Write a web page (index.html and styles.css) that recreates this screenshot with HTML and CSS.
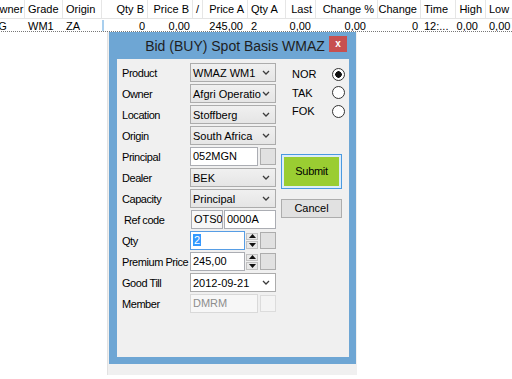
FILE: index.html
```html
<!DOCTYPE html>
<html lang="en">
<head>
    <meta charset="UTF-8">
    <title>Bid (BUY) Spot Basis WMAZ</title>
    <link rel="stylesheet" href="styles.css">
</head>
<body>
    <div class="grid">
        <div class="grid-row grid-head">
            <div class="cell c-owner left">Owner</div>
            <div class="cell c-grade left">Grade</div>
            <div class="cell c-origin left">Origin</div>
            <div class="cell c-qtyb">Qty B</div>
            <div class="cell c-priceb">Price B</div>
            <div class="cell c-slash left">/</div>
            <div class="cell c-pricea">Price A</div>
            <div class="cell c-qtya left">Qty A</div>
            <div class="cell c-last">Last</div>
            <div class="cell c-chgp">Change %</div>
            <div class="cell c-chg">Change</div>
            <div class="cell c-time left">Time</div>
            <div class="cell c-high">High</div>
            <div class="cell c-low left">Low</div>
        </div>
        <div class="grid-row grid-data">
            <div class="cell c-owner left">AG</div>
            <div class="cell c-grade left">WM1</div>
            <div class="cell c-origin left">ZA</div>
            <div class="cell c-qtyb marker">0</div>
            <div class="cell c-priceb">0,00</div>
            <div class="cell c-slash"></div>
            <div class="cell c-pricea pad5">245,00</div>
            <div class="cell c-qtya left">2</div>
            <div class="cell c-last pad5">0,00</div>
            <div class="cell c-chgp pad12">0,00</div>
            <div class="cell c-chg">0</div>
            <div class="cell c-time left">12:...</div>
            <div class="cell c-high pad8">0,00</div>
            <div class="cell c-low left">0,00</div>
        </div>
    </div>

    <!-- panel that sits behind the dialog -->
    <div class="backdrop"></div>

    <div class="dialog">
        <div class="titlebar">
            <span class="title">Bid (BUY) Spot Basis WMAZ</span>
            <button class="close">x</button>
        </div>
        <div class="dialog-body">
            <div class="fields">
                <label>Product</label>
                <div class="combo"><span>WMAZ WM1</span><svg width="8" height="5"><path d="M1 1 L4 4 L7 1" /></svg></div>

                <label>Owner</label>
                <div class="combo"><span>Afgri Operatio</span><svg width="8" height="5"><path d="M1 1 L4 4 L7 1" /></svg></div>

                <label>Location</label>
                <div class="combo"><span>Stoffberg</span><svg width="8" height="5"><path d="M1 1 L4 4 L7 1" /></svg></div>

                <label>Origin</label>
                <div class="combo"><span>South Africa</span><svg width="8" height="5"><path d="M1 1 L4 4 L7 1" /></svg></div>

                <label>Principal</label>
                <div class="with-btn">
                    <div class="text">052MGN</div>
                    <div class="sq"></div>
                </div>

                <label>Dealer</label>
                <div class="combo"><span>BEK</span><svg width="8" height="5"><path d="M1 1 L4 4 L7 1" /></svg></div>

                <label>Capacity</label>
                <div class="combo"><span>Principal</span><svg width="8" height="5"><path d="M1 1 L4 4 L7 1" /></svg></div>

                <label class="indent">Ref code</label>
                <div class="ref">
                    <div class="text ro">OTS0</div>
                    <div class="text">0000A</div>
                </div>

                <label>Qty</label>
                <div class="with-btn">
                    <div class="text focus"><span class="sel">2</span></div>
                    <div class="spin">
                        <div class="spin-btn"><svg width="7" height="4"><path d="M0 4 L3.5 0 L7 4 Z" /></svg></div>
                        <div class="spin-btn"><svg width="7" height="4"><path d="M0 0 L3.5 4 L7 0 Z" /></svg></div>
                    </div>
                    <div class="sq"></div>
                </div>

                <label>Premium Price</label>
                <div class="with-btn">
                    <div class="text">245,00</div>
                    <div class="spin">
                        <div class="spin-btn"><svg width="7" height="4"><path d="M0 4 L3.5 0 L7 4 Z" /></svg></div>
                        <div class="spin-btn"><svg width="7" height="4"><path d="M0 0 L3.5 4 L7 0 Z" /></svg></div>
                    </div>
                    <div class="sq"></div>
                </div>

                <label>Good Till</label>
                <div class="combo date"><span>2012-09-21</span><svg width="8" height="5"><path d="M1 1 L4 4 L7 1" /></svg></div>

                <label>Member</label>
                <div class="with-btn">
                    <div class="text disabled">DMRM</div>
                    <div class="sq disabled"></div>
                </div>
            </div>

            <div class="side">
                <div class="radios">
                    <div class="radio-row"><span>NOR</span><span class="radio checked"></span></div>
                    <div class="radio-row"><span>TAK</span><span class="radio"></span></div>
                    <div class="radio-row"><span>FOK</span><span class="radio"></span></div>
                </div>
                <button class="btn submit">Submit</button>
                <button class="btn cancel">Cancel</button>
            </div>
        </div>
    </div>
</body>
</html>
```

FILE: styles.css
```css
* {
    box-sizing: border-box;
}
body {
    margin: 0;
    width: 512px;
    height: 379px;
    overflow: hidden;
    position: relative;
    background-color: #fff;
    font-family: "Liberation Sans", Arial, sans-serif;
    font-size: 11px;
    color: #000;
}

/* grid in the background, scrolled a little to the right */
.grid {
    width: 531px;
    margin-left: -11px;
}
.grid-row {
    display: flex;
    white-space: nowrap;
}
.grid-head {
    height: 19px;
    border-bottom: 1px solid #e4e4e4;
}
.grid-head .cell {
    line-height: 18px;
    border-right: 1px solid #e6e6e6;
}
.grid-data {
    height: 13px;
    border-bottom: 1px dotted #777;
    line-height: 12px;
    padding-top: 1px;
}
.cell {
    overflow: hidden;
    text-align: right;
    padding-right: 3px;
}
.cell.left {
    text-align: left;
    padding-left: 3px;
    padding-right: 0;
}
.cell.pad5 { padding-right: 5px; }
.cell.pad8 { padding-right: 8px; }
.cell.pad12 { padding-right: 12px; }
.cell.marker {
    border-left: 2px solid #a9cfee;
}
.c-owner { width: 36px; }
.c-owner.left { padding-left: 2px; }
.c-grade { width: 38px; }
.c-origin { width: 39px; }
.c-qtyb { width: 46px; }
.c-priceb { width: 45px; }
.c-slash { width: 10px; }
.c-pricea { width: 45px; }
.c-qtya { width: 38px; }
.c-last { width: 30px; }
.c-chgp { width: 62px; }
.c-chg { width: 43px; }
.c-time { width: 35px; }
.c-high { width: 30px; }
.c-low { width: 34px; }

.backdrop {
    position: absolute;
    left: 107px;
    top: 32px;
    width: 250px;
    height: 343px;
    background-color: #f0f0f0;
    border-left: 1px solid #e2e2e2;
}

/* dialog window */
.dialog {
    position: absolute;
    left: 109px;
    top: 32px;
    width: 247px;
    height: 332px;
    background-color: #6ea6d4;
    padding: 0 7px 7px 8px;
    display: flex;
    flex-direction: column;
}
.titlebar {
    height: 27px;
    display: flex;
    align-items: center;
    justify-content: center;
    position: relative;
    padding-left: 4px;
}
.title {
    font-size: 14px;
    color: #1e1e1e;
}
.close {
    position: absolute;
    right: 2px;
    top: 4px;
    width: 18px;
    height: 16px;
    border: none;
    padding: 0;
    background-color: #c75050;
    color: #fff;
    font-family: "Liberation Sans", Arial, sans-serif;
    font-weight: bold;
    font-size: 10px;
    line-height: 14px;
}
.dialog-body {
    flex: 1;
    background-color: #f0f0f0;
    display: flex;
    padding: 4px 0 0 5px;
}

.fields {
    display: grid;
    grid-template-columns: 68px 86px;
    grid-auto-rows: 19px;
    row-gap: 2px;
}
.fields label {
    align-self: center;
    white-space: nowrap;
    letter-spacing: -0.45px;
}
.fields label.indent {
    padding-left: 2px;
}
.combo {
    display: flex;
    align-items: center;
    justify-content: space-between;
    border: 1px solid #acacac;
    background: linear-gradient(#f0f0f0, #e5e5e5);
    padding: 0 5px 0 2px;
    white-space: nowrap;
    overflow: hidden;
}
.combo.date {
    background: #fff;
}
.combo svg path {
    fill: none;
    stroke: #3c3c3c;
    stroke-width: 1.3;
}
.text {
    border: 1px solid #abadb3;
    background-color: #fff;
    padding: 0 2px;
    line-height: 17px;
    white-space: nowrap;
    overflow: hidden;
}
.text.ro {
    background-color: #f7f7f7;
}
.text.focus {
    border-color: #569de5;
}
.text.disabled {
    border-color: #d9d9d9;
    background-color: #f7f7f7;
    color: #8d8d8d;
}
.sel {
    background-color: #3399ff;
    color: #fff;
    padding: 0 1px;
}
.with-btn {
    display: flex;
    align-items: center;
}
.with-btn .text {
    flex: 1;
    height: 19px;
}
.sq {
    width: 16px;
    height: 17px;
    margin-left: 2px;
    background-color: #e1e1e1;
    border: 1px solid #adadad;
}
.sq.disabled {
    background-color: #f4f4f4;
    border-color: #dcdcdc;
}
.spin {
    width: 12px;
    height: 16px;
    margin-left: 1px;
    display: flex;
    flex-direction: column;
    gap: 1px;
}
.spin-btn {
    flex: 1;
    display: flex;
    align-items: center;
    justify-content: center;
    background-color: #e8e8e8;
    border: 1px solid #c2c2c2;
}
.spin-btn svg path {
    fill: #111;
}
.ref {
    display: flex;
    gap: 1px;
    padding-left: 1px;
}
.ref .text:first-child {
    width: 32px;
}
.ref .text:last-child {
    flex: 1;
}

/* right hand column */
.side {
    margin-left: 5px;
    width: 64px;
    display: flex;
    flex-direction: column;
    align-items: flex-start;
}
.radios {
    width: 64px;
    margin-top: 2px;
}
.radio-row {
    display: flex;
    align-items: center;
    justify-content: space-between;
    height: 18.5px;
    padding-left: 11px;
}
.radio {
    width: 13px;
    height: 13px;
    border: 1px solid #333;
    border-radius: 50%;
    background-color: #fff;
}
.radio.checked {
    background: radial-gradient(circle, #111 0, #111 3px, #fff 3.5px);
}
.btn {
    width: 61px;
    font-family: "Liberation Sans", Arial, sans-serif;
    font-size: 11px;
    color: #000;
    padding: 0;
}
.submit {
    margin-top: 33px;
    height: 35px;
    background-color: #9acd32;
    border: 1px solid #4a9ae0;
    box-shadow: inset 0 0 0 2px #dcecfb;
    letter-spacing: -0.3px;
}
.cancel {
    margin-top: 10px;
    height: 19px;
    background-color: #e1e1e1;
    border: 1px solid #adadad;
}
```
